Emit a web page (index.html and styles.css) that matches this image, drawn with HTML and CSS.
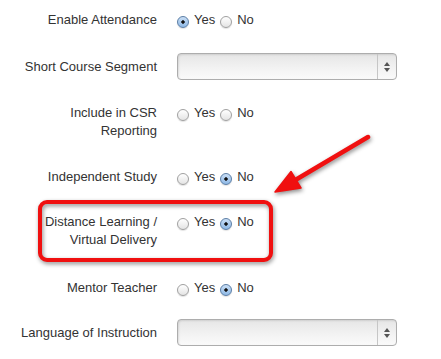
FILE: index.html
```html
<!DOCTYPE html>
<html>
<head>
<meta charset="utf-8">
<link rel="stylesheet" href="styles.css">
</head>
<body>
<div class="page">
  <form class="form">
    <div class="row">
      <div class="label">Enable Attendance</div>
      <div class="control radios">
        <span class="radio checked"></span><span class="opt">Yes</span>
        <span class="radio"></span><span class="opt">No</span>
      </div>
    </div>
    <div class="row row-select">
      <div class="label">Short Course Segment</div>
      <div class="control">
        <div class="select"><span class="select-arrows"><span class="up"></span><span class="down"></span></span></div>
      </div>
    </div>
    <div class="row row-two">
      <div class="label">Include in CSR Reporting</div>
      <div class="control radios">
        <span class="radio"></span><span class="opt">Yes</span>
        <span class="radio"></span><span class="opt">No</span>
      </div>
    </div>
    <div class="row row-before-box">
      <div class="label">Independent Study</div>
      <div class="control radios">
        <span class="radio"></span><span class="opt">Yes</span>
        <span class="radio checked"></span><span class="opt">No</span>
      </div>
    </div>
    <div class="row row-two row-boxed">
      <div class="label">Distance Learning / Virtual Delivery</div>
      <div class="control radios">
        <span class="radio"></span><span class="opt">Yes</span>
        <span class="radio checked"></span><span class="opt">No</span>
      </div>
    </div>
    <div class="row row-after-box">
      <div class="label">Mentor Teacher</div>
      <div class="control radios">
        <span class="radio"></span><span class="opt">Yes</span>
        <span class="radio checked"></span><span class="opt">No</span>
      </div>
    </div>
    <div class="row row-select">
      <div class="label">Language of Instruction</div>
      <div class="control">
        <div class="select"><span class="select-arrows"><span class="up"></span><span class="down"></span></span></div>
      </div>
    </div>
  </form>
  <div class="highlight-box"></div>
  <svg class="annot-arrow" width="441" height="359" viewBox="0 0 441 359">
    <line x1="368" y1="137" x2="292" y2="182" stroke="#f01010" stroke-width="4.5" stroke-linecap="round"/>
    <polygon points="275,192 291,171.5 301,188" fill="#f01010" stroke="#f01010" stroke-width="1.5" stroke-linejoin="round"/>
  </svg>
</div>
</body>
</html>
```
FILE: styles.css
```css
html, body {
  margin: 0;
  padding: 0;
  background: #ffffff;
}
.page {
  position: relative;
  width: 441px;
  height: 359px;
  overflow: hidden;
  font-family: "Liberation Sans", Arial, Helvetica, sans-serif;
  font-size: 13px;
  color: #333333;
}
.form {
  padding-top: 11px;
  margin: 0;
}
.row {
  display: flex;
  align-items: flex-start;
  margin-bottom: 24px;
}
.row-two {
  margin-bottom: 28px;
}
.row-before-box {
  margin-bottom: 27px;
}
.row-boxed {
  margin-bottom: 30px;
}
.row-after-box {
  margin-bottom: 22px;
}
.row-select {
  align-items: center;
}
.label {
  width: 142px;
  margin-left: 15px;
  text-align: right;
  line-height: 18px;
}
.control {
  margin-left: 20px;
}
.radios {
  display: flex;
  align-items: center;
  height: 18px;
  line-height: 18px;
}
.radio {
  display: inline-block;
  box-sizing: border-box;
  width: 12px;
  height: 12px;
  margin-top: 3px;
  margin-right: 5px;
  border-radius: 50%;
  border: 1px solid #a0a0a0;
  background: linear-gradient(#ffffff, #e4e4e4);
  box-shadow: 0 1px 1px rgba(0,0,0,0.12);
}
.radio.checked {
  border-color: #5b7ea6;
  background:
    radial-gradient(circle at 50% 50%, #111 0, #111 1.4px, transparent 2px),
    linear-gradient(#c9def5, #8fb9e6);
}
.opt {
  margin-right: 5px;
}
.select {
  position: relative;
  box-sizing: border-box;
  width: 220px;
  height: 27px;
  border: 1px solid #adadad;
  border-radius: 4px;
  background: linear-gradient(#e6e6e6, #f3f3f3 60%, #fafafa);
  box-shadow: inset 1px 1px 2px rgba(0,0,0,0.10);
}
.select-arrows {
  position: absolute;
  right: 0;
  top: 0;
  bottom: 0;
  width: 18px;
  border-left: 1px solid #c6c6c6;
  display: flex;
  flex-direction: column;
  align-items: center;
  justify-content: center;
  gap: 2px;
}
.up {
  width: 0;
  height: 0;
  border-left: 3px solid transparent;
  border-right: 3px solid transparent;
  border-bottom: 4px solid #555;
}
.down {
  width: 0;
  height: 0;
  border-left: 3px solid transparent;
  border-right: 3px solid transparent;
  border-top: 4px solid #555;
}
.highlight-box {
  position: absolute;
  left: 38px;
  top: 200px;
  width: 235px;
  height: 62px;
  box-sizing: border-box;
  border: 4px solid #f01010;
  border-radius: 9px;
  filter: drop-shadow(1px 2px 2px rgba(0,0,0,0.45));
}
.annot-arrow {
  position: absolute;
  left: 0;
  top: 0;
  filter: drop-shadow(1px 2px 2px rgba(0,0,0,0.45));
}
```
